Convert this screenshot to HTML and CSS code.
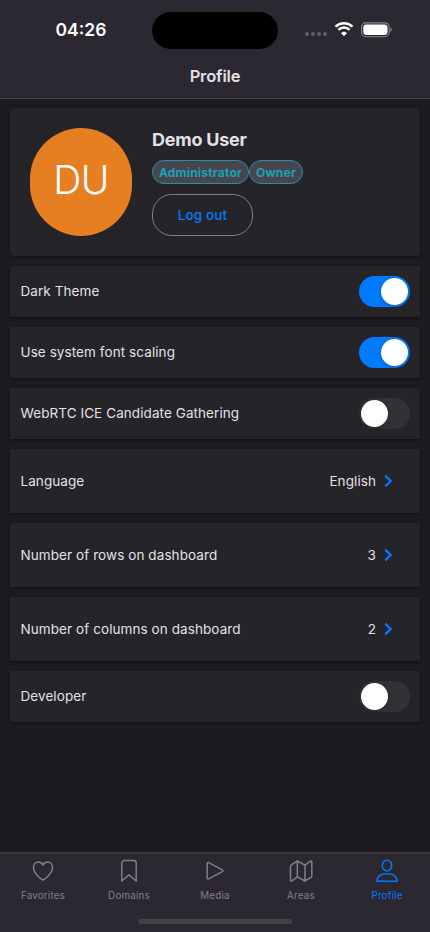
FILE: index.html
```html
<!DOCTYPE html>
<html lang="en">
<head>
<meta charset="utf-8">
<meta name="viewport" content="width=device-width, initial-scale=1">
<title>Profile</title>
<link rel="stylesheet" href="styles.css">
</head>
<body>
<div class="app">
  <header class="header">
    <div class="status">
      <div class="time">04:26</div>
      <div class="island"></div>
      <div class="signals">
        <svg class="cell" width="24" height="6" viewBox="0 0 24 6"><circle cx="3" cy="3" r="2"/><circle cx="9" cy="3" r="2"/><circle cx="15" cy="3" r="2"/><circle cx="21" cy="3" r="2"/></svg>
        <svg class="wifi" width="20" height="16" viewBox="0 0 20 16"><path d="M1.5 5.6a12.2 12.2 0 0 1 17 0" /><path d="M4.400 8.900a8 8 0 0 1 11.200 0"/><path class="dot" d="M10 14.800 7.400 12.200a3.700 3.700 0 0 1 5.200 0Z"/></svg>
        <svg class="battery" width="32" height="16" viewBox="0 0 32 16"><rect class="shell" x=".6" y=".9" width="27.6" height="13.8" rx="4.2"/><rect class="charge" x="2.3" y="2.6" width="24.2" height="10.4" rx="3"/><path class="cap" d="M29.4 5.6q1.5.7 1.5 2.2t-1.5 2.2Z"/></svg>
      </div>
    </div>
    <h1 class="title">Profile</h1>
  </header>
  <main class="content">
    <section class="card user">
      <div class="avatar"><span>DU</span></div>
      <div class="details">
        <h2 class="name">Demo User</h2>
        <div class="chips"><span class="chip admin">Administrator</span><span class="chip owner">Owner</span></div>
        <button class="logout">Log out</button>
      </div>
    </section>
    <section class="card row"><span class="label">Dark Theme</span><i class="toggle on"></i></section>
    <section class="card row"><span class="label">Use system font scaling</span><i class="toggle on"></i></section>
    <section class="card row"><span class="label">WebRTC ICE Candidate Gathering</span><i class="toggle"></i></section>
    <section class="card row tall"><span>Language</span><div class="value"><span>English</span><svg width="9" height="14" viewBox="0 0 9 14"><path d="m1.200 1.600 5.500 5.400-5.500 5.400"/></svg></div></section>
    <section class="card row tall"><span>Number of rows on dashboard</span><div class="value"><span>3</span><svg width="9" height="14" viewBox="0 0 9 14"><path d="m1.200 1.600 5.500 5.400-5.500 5.400"/></svg></div></section>
    <section class="card row tall"><span>Number of columns on dashboard</span><div class="value"><span>2</span><svg width="9" height="14" viewBox="0 0 9 14"><path d="m1.200 1.600 5.500 5.400-5.500 5.400"/></svg></div></section>
    <section class="card row"><span class="label">Developer</span><i class="toggle"></i></section>
  </main>
  <nav class="tabs">
    <div class="tabrow">
      <a class="tab"><svg viewBox="0 0 24 24"><path d="M12 21c-1.200-.6-9.500-6.100-9.500-12.500 0-3.200 2-5.400 4.900-5.400 2 0 3.600 1 4.600 2.900 1-1.900 2.600-2.900 4.600-2.900 2.900 0 4.900 2.200 4.900 5.400C21.500 14.900 13.200 20.400 12 21Z"/></svg><span>Favorites</span></a>
      <a class="tab"><svg viewBox="0 0 24 24"><path d="M4.800 22V4a2.500 2.500 0 0 1 2.500-2.500h9.400a2.500 2.500 0 0 1 2.500 2.500v18L12 15.900Z"/></svg><span>Domains</span></a>
      <a class="tab"><svg viewBox="0 0 24 24"><path d="M4.200 4.700c0-.9.700-1.400 1.500-1l13.600 7.200c.9.500.9 1.300 0 1.800L5.700 19.900c-.8.400-1.500-.1-1.500-1Z"/></svg><span>Media</span></a>
      <a class="tab"><svg viewBox="0 0 24 24"><path d="M8.300 2 16 6.100l5.200-3.700q1.600-1 1.600.8v13.700q0 1-.8 1.500L16 22l-7.700-4.100-5.300 3.900q-1.500.9-1.500-.8V7.300q0-1 .8-1.500ZM8.300 2v15.900M16 6.100V22"/></svg><span>Areas</span></a>
      <a class="tab active"><svg viewBox="0 0 24 24"><ellipse cx="12" cy="6.600" rx="4.700" ry="5.300"/><path d="M2.600 22.300c-.6 0-.9-.4-.8-1 .8-4.100 4.600-6.500 10.200-6.500s9.400 2.400 10.200 6.500c.1.600-.2 1-.8 1Z"/></svg><span>Profile</span></a>
    </div>
    <div class="home"></div>
  </nav>
</div>
</body>
</html>
```
FILE: styles.css
```css
* { box-sizing: border-box; }
body { margin: 0; background: #1c1b1f; color: #e4e0e5; font-family: Inter, "Liberation Sans", sans-serif; }
.app { height: 932px; display: flex; flex-direction: column; overflow: hidden; }
.header { height: 99px; background: #2c2831; border-bottom: 1px solid #49454e; }
.status { height: 60px; display: grid; grid-template-columns: 152px 126px 152px; align-items: center; }
.time { padding: 0 0 2px 10px; text-align: center; color: #fff; font-size: 17.500px; font-weight: 600; letter-spacing: 0; }
.island { height: 37px; border-radius: 19px; background: #000; }
.signals { display: flex; align-items: center; padding-left: 26px; }
.cell { fill: #625f66; margin-top: 8px; }
.wifi { margin: -2px 0 0 6px; fill: none; stroke: #fff; stroke-width: 2.500; }
.wifi .dot { fill: #fff; stroke: #fff; stroke-width: .6; }
.battery { margin: -1px 0 0 7px; }
.shell { fill: none; stroke: #8a878e; stroke-width: 1.100; }
.charge { fill: #fff; }
.cap { fill: #8a878e; }
.title { margin: 0; text-align: center; font-size: 16.500px; line-height: 32px; font-weight: 600; letter-spacing: -.15px; }
.content { flex: 1; padding: 9px 10px; display: flex; flex-direction: column; gap: 10px; }
.card { background: #252429; box-shadow: 0 1px 3px rgba(0,0,0,.45); border-radius: 1px; }
.user { height: 148px; padding: 20px; display: flex; gap: 20px; border-radius: 4px; }
.avatar { width: 102px; height: 108px; border-radius: 51px; background: #e67e22; color: #fff; display: flex; align-items: center; justify-content: center; font-size: 39px; font-weight: 350; letter-spacing: -.5px; }
.avatar span { margin-top: -5px; }
.name { margin: 0; font-size: 18px; line-height: 24px; font-weight: 700; letter-spacing: -.25px; }
.chips { display: flex; margin-top: 8px; }
.chip { height: 24px; border: 1px solid #2192a4; border-radius: 12px; background: #49454f; color: #17a2b8; font-size: 12px; line-height: 23px; font-weight: 700; text-align: center; letter-spacing: .2px; }
.admin { width: 97px; }
.owner { width: 54px; }
.logout { display: block; width: 101px; height: 42px; margin-top: 10px; padding: 0; border: 1px solid #817e86; border-radius: 20px; background: transparent; color: #007aff; font: 500 13.500px Inter, sans-serif; letter-spacing: .15px; }
.row { height: 51px; padding: 0 10px 0 10.500px; display: flex; align-items: center; justify-content: space-between; font-size: 13.500px; letter-spacing: .08px; white-space: nowrap; }
.label { padding-bottom: 2px; }
.tall { height: 64px; }
.toggle { width: 51px; height: 31px; padding: 2px; border-radius: 16px; background: #323136; display: flex; }
.toggle::after { content: ""; width: 27px; height: 27px; border-radius: 50%; background: #fff; box-shadow: 0 1px 4px rgba(0,0,0,.2); }
.on { background: #007aff; justify-content: flex-end; }
.value { display: flex; align-items: center; gap: 8px; padding-right: 17px; }
.value svg { fill: none; stroke: #007aff; stroke-width: 2.200; }
.tabs { height: 80px; background: #2c2831; border-top: 2px solid #3b383e; }
.tabrow { height: 65px; display: grid; grid-template-columns: repeat(5, 1fr); }
.tab { display: flex; flex-direction: column; align-items: center; padding-top: 5px; color: #817e86; font-size: 9.800px; line-height: 14px; letter-spacing: .2px; }
.tab svg { width: 24px; height: 24px; margin-bottom: 6px; fill: none; stroke: currentColor; stroke-width: 1.500; stroke-linejoin: round; }
.active { color: #007aff; }
.home { width: 154px; height: 5px; margin: 0 auto; border-radius: 3px; background: #434144; }
```
